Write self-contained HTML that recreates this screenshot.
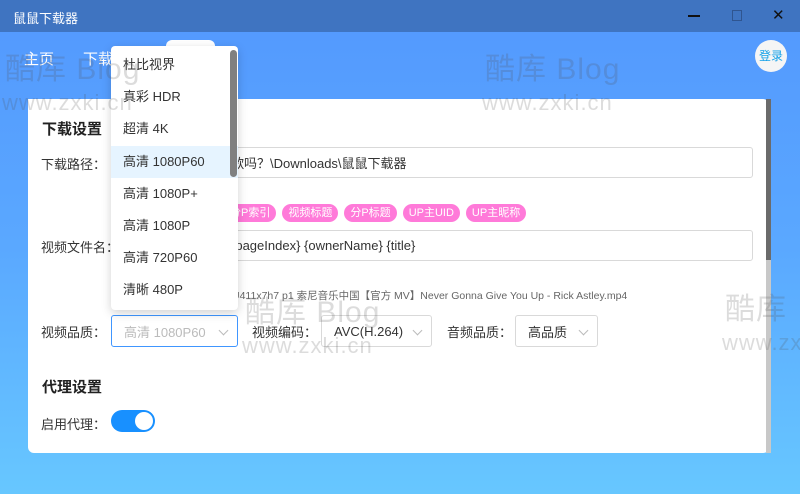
<!DOCTYPE html>
<html><head><meta charset="utf-8"><style>
*{margin:0;padding:0;box-sizing:border-box}
body{width:800px;height:494px;overflow:hidden;font-family:"Liberation Sans","Noto Sans CJK SC",sans-serif;position:relative;background:linear-gradient(180deg,#5398fe 0%,#5aa8ff 50%,#67c7ff 100%)}
.abs{position:absolute}
.title{left:0;top:0;width:800px;height:32px;background:#3f74c1;color:#fff;font-size:13px}
.card{left:28px;top:99px;width:741px;height:354px;background:#fff;border-radius:0 6px 6px 6px}
.lbl{font-size:13px;color:#333;white-space:nowrap}
.h{font-size:16px;font-weight:bold;color:#222}
.inp{border:1px solid #d9d9d9;border-radius:3px;background:#fff;font-size:13px;color:#333;padding-left:6px;display:flex;align-items:center}
.tag{height:18px;border-radius:9px;background:#ff7ad9;color:#fff;font-size:11px;line-height:18px;padding:0 6px}
.sel{border:1px solid #d9d9d9;border-radius:3px;height:32px;font-size:13px;color:#333;display:flex;align-items:center;padding-left:12px}
.chev{position:absolute;right:10px;top:11px;width:7px;height:7px;border-right:1px solid #bbb;border-bottom:1px solid #bbb;transform:rotate(45deg)}
.dd{left:111px;top:46px;width:127px;height:264px;background:#fff;border-radius:4px;box-shadow:0 3px 10px rgba(0,0,0,.18)}
.it{position:absolute;left:0;width:127px;height:32px;line-height:32px;padding-left:12px;font-size:13px;color:#333}
.wm{color:rgba(80,80,80,.2);white-space:nowrap;letter-spacing:1px}
</style></head><body>
<div class="abs title"><span class="abs" style="left:13px;top:8px">鼠鼠下载器</span>
<div class="abs" style="left:688px;top:15px;width:12px;height:1.5px;background:#111"></div>
<div class="abs" style="left:732px;top:10px;width:10px;height:11px;border:1px solid #2f5590"></div>
<span class="abs" style="left:772px;top:6px;font-size:15px;color:#111">✕</span>
</div>
<span class="abs" style="left:24px;top:48px;color:#fff;font-size:15px">主页</span>
<span class="abs" style="left:83px;top:48px;color:#fff;font-size:15px">下载</span>
<div class="abs" style="left:166px;top:40px;width:49px;height:20px;background:#fff;border-radius:6px"></div>
<div class="abs" style="left:755px;top:40px;width:32px;height:32px;border-radius:50%;background:#f5f5f5;color:#12a0e8;font-size:12px;line-height:32px;text-align:center">登录</div>
<div class="abs card">
 <div class="abs h" style="left:14px;top:19px;font-size:15px">下载设置</div>
 <div class="abs lbl" style="left:13px;top:55px">下载路径：</div>
 <div class="abs inp" style="left:196px;top:48px;width:529px;height:31px">歌吗？\Downloads\鼠鼠下载器</div>
 <div class="abs" style="left:196px;top:105px;display:flex;gap:6px">
  <span class="tag">分P索引</span><span class="tag">视频标题</span><span class="tag">分P标题</span><span class="tag">UP主UID</span><span class="tag">UP主昵称</span></div>
 <div class="abs lbl" style="left:13px;top:138px">视频文件名：</div>
 <div class="abs inp" style="left:196px;top:131px;width:529px;height:31px">{pageIndex} {ownerName} {title}</div>
 <div class="abs" style="left:204px;top:189px;font-size:10.5px;color:#666;white-space:nowrap">U411x7h7 p1 索尼音乐中国【官方 MV】Never Gonna Give You Up - Rick Astley.mp4</div>
 <div class="abs lbl" style="left:13px;top:223px">视频品质：</div>
 <div class="abs sel" style="left:83px;top:216px;width:127px;border-color:#4096ff;color:#bbb">高清 1080P60<span class="chev"></span></div>
 <div class="abs lbl" style="left:224px;top:223px">视频编码：</div>
 <div class="abs sel" style="left:293px;top:216px;width:111px">AVC(H.264)<span class="chev"></span></div>
 <div class="abs lbl" style="left:419px;top:223px">音频品质：</div>
 <div class="abs sel" style="left:487px;top:216px;width:83px">高品质<span class="chev"></span></div>
 <div class="abs h" style="left:14px;top:277px;font-size:15px">代理设置</div>
 <div class="abs lbl" style="left:13px;top:315px">启用代理：</div>
 <div class="abs" style="left:83px;top:311px;width:44px;height:22px;border-radius:11px;background:#1890ff"><div class="abs" style="left:24px;top:2px;width:18px;height:18px;border-radius:50%;background:#fff"></div></div>
 <div class="abs" style="left:738px;top:0;width:5px;height:354px;background:#c8c8c8"></div>
 <div class="abs" style="left:738px;top:0;width:5px;height:161px;background:#6b6b6b"></div>
</div>
<div class="abs dd">
 <div class="it" style="top:3px">杜比视界</div>
 <div class="it" style="top:35px">真彩 HDR</div>
 <div class="it" style="top:67px">超清 4K</div>
 <div class="it" style="top:100px;background:#e6f4ff">高清 1080P60</div>
 <div class="it" style="top:132px">高清 1080P+</div>
 <div class="it" style="top:164px">高清 1080P</div>
 <div class="it" style="top:196px">高清 720P60</div>
 <div class="it" style="top:228px">清晰 480P</div>
 <div class="abs" style="left:119px;top:4px;width:7px;height:127px;border-radius:4px;background:#808080"></div>
</div>
<div class="abs wm" style="left:5px;top:44px;font-size:30px">酷库 Blog</div>
<div class="abs wm" style="left:2px;top:90px;font-size:22px">www.zxki.cn</div>
<div class="abs wm" style="left:485px;top:44px;font-size:30px">酷库 Blog</div>
<div class="abs wm" style="left:482px;top:90px;font-size:22px">www.zxki.cn</div>
<div class="abs wm" style="left:245px;top:287px;font-size:30px">酷库 Blog</div>
<div class="abs wm" style="left:242px;top:333px;font-size:22px">www.zxki.cn</div>
<div class="abs wm" style="left:725px;top:284px;font-size:30px">酷库</div>
<div class="abs wm" style="left:722px;top:330px;font-size:22px">www.zx</div>
</body></html>
